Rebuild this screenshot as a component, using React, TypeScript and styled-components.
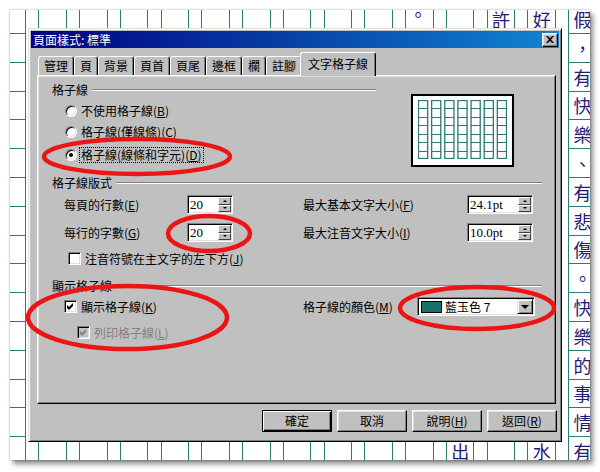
import React from 'react';
import styled, { createGlobalStyle } from 'styled-components';

const TEAL = '#2b7a75';
const FACE = '#c0c0c0';
const UI_FONT = `"Noto Sans CJK TC", "Liberation Sans", sans-serif`;

const GlobalStyle = createGlobalStyle`
  html, body { margin: 0; padding: 0; background: #ffffff; }
  body { font-family: ${UI_FONT}; }
  *, *::before, *::after { box-sizing: border-box; }
`;

/* ---------- manuscript page ---------- */

const Root = styled.div`
  position: relative;
  width: 600px;
  height: 472px;
  padding: 10px;
  background: #fff;
  overflow: hidden;
`;

const Page = styled.div`
  width: 580px;
  height: 450px;
  background: #fff;
  overflow: hidden;
  box-shadow: 0 0 2px rgba(0, 0, 0, 0.35), 3px 4px 5px rgba(0, 0, 0, 0.45);
`;

const Grid = styled.div`
  display: flex;
  height: 100%;
  margin-left: -24.77px;
`;

const Unit = styled.div`
  flex: none;
  display: flex;
  width: 40.77px;
  height: 100%;
`;

const Gutter = styled.div`
  flex: none;
  width: 12.27px;
`;

const CharColumn = styled.div`
  flex: none;
  width: 28.5px;
  height: 100%;
  border-left: 1px solid ${TEAL};
  border-right: 1px solid ${TEAL};
`;

const Cells = styled.div`
  display: flex;
  flex-direction: column;
  margin-top: -4.8px;
`;

const Cell = styled.div<{ $up?: boolean }>`
  flex: none;
  height: 28.8px;
  border-bottom: 1px solid ${TEAL};
  display: flex;
  align-items: center;
  justify-content: center;
  padding-bottom: ${(p) => (p.$up ? 11 : 0)}px;
  padding-right: ${(p) => (p.$up ? 3 : 0)}px;
  font-family: ${UI_FONT};
  font-size: 18px;
  line-height: 1;
  color: #1d1d78;
`;

/* ---------- dialog ---------- */

const Dialog = styled.div`
  position: absolute;
  left: 28px;
  top: 28px;
  width: 534px;
  height: 414px;
  display: flex;
  flex-direction: column;
  padding: 2px;
  background: ${FACE};
  border: 1px solid;
  border-color: #dfdfdf #000 #000 #dfdfdf;
  box-shadow: inset 1px 1px 0 #fff, inset -1px -1px 0 #808080;
  font-family: ${UI_FONT};
  font-size: 12px;
  line-height: 14px;
  color: #000;
`;

const TitleBar = styled.div`
  flex: none;
  height: 17px;
  display: flex;
  align-items: center;
  padding: 0 1px 0 2px;
  background: linear-gradient(to right, #000080, #1084d0);
  color: #fff;
`;

const TitleText = styled.span`
  white-space: nowrap;
`;

const CloseButton = styled.div`
  margin-left: auto;
  width: 16px;
  height: 14px;
  display: flex;
  align-items: center;
  justify-content: center;
  background: ${FACE};
  border: 1px solid;
  border-color: #fff #000 #000 #fff;
  box-shadow: inset -1px -1px 0 #808080, inset 1px 1px 0 #dfdfdf;
`;

const DialogBody = styled.div`
  flex: 1;
  display: flex;
  flex-direction: column;
  padding: 4px 1px 0 6px;
`;

const TabStrip = styled.div`
  flex: none;
  height: 24px;
  display: flex;
  align-items: flex-end;
  padding-left: 1px;
  position: relative;
  z-index: 1;
`;

const Tab = styled.div<{ $w: number; $active?: boolean }>`
  flex: none;
  position: relative;
  z-index: ${(p) => (p.$active ? 2 : 1)};
  width: ${(p) => p.$w + (p.$active ? 4 : 0)}px;
  height: ${(p) => (p.$active ? 24 : 19)}px;
  margin: 0 ${(p) => (p.$active ? -2 : 0)}px ${(p) => (p.$active ? 0 : 1)}px;
  display: flex;
  align-items: center;
  justify-content: center;
  padding-bottom: ${(p) => (p.$active ? 1 : 0)}px;
  background: ${FACE};
  border: 1px solid;
  border-bottom: none;
  border-color: #fff #000 transparent #fff;
  border-radius: 3px 3px 0 0;
  box-shadow: inset -1px 0 0 #808080;
  white-space: nowrap;
`;

const Panel = styled.div`
  flex: none;
  position: relative;
  width: 519px;
  height: 329px;
  margin-top: -1px;
  padding: 7px 0 0 14px;
  display: flex;
  flex-direction: column;
  background: ${FACE};
  border: 1px solid;
  border-color: #fff #000 #000 #fff;
  box-shadow: inset -1px -1px 0 #808080, inset 1px 1px 0 #dfdfdf;
`;

const TopSection = styled.div`
  flex: none;
  height: 93px;
  display: flex;
`;

const GroupColumn = styled.div<{ $w: number }>`
  flex: none;
  width: ${(p) => p.$w}px;
  display: flex;
  flex-direction: column;
`;

const GroupHeader = styled.div<{ $w: number; $mt?: number }>`
  flex: none;
  width: ${(p) => p.$w}px;
  height: 14px;
  margin-top: ${(p) => p.$mt ?? 0}px;
  display: flex;
  align-items: center;
  gap: 4px;
`;

const GroupLabel = styled.span`
  white-space: nowrap;
`;

const Rule = styled.div`
  flex: 1;
  border-top: 1px solid #808080;
  border-bottom: 1px solid #fff;
`;

const RadioList = styled.div`
  display: flex;
  flex-direction: column;
  padding-left: 13px;
`;

const OptionRow = styled.div<{ $mt?: number; $pl?: number; $h?: number }>`
  flex: none;
  height: ${(p) => p.$h ?? 21}px;
  margin-top: ${(p) => p.$mt ?? 0}px;
  padding-left: ${(p) => p.$pl ?? 0}px;
  display: flex;
  align-items: center;
  gap: 4px;
  white-space: nowrap;
`;

const Radio = styled.span<{ $checked?: boolean }>`
  flex: none;
  width: 12px;
  height: 12px;
  border-radius: 50%;
  display: flex;
  align-items: center;
  justify-content: center;
  background: #fff;
  border: 1px solid;
  border-color: #808080 #fff #fff #808080;
  box-shadow: inset 1px 1px 0 #000, inset -1px -1px 0 #dfdfdf;
  &::after {
    content: '';
    width: 4px;
    height: 4px;
    border-radius: 50%;
    background: ${(p) => (p.$checked ? '#000' : 'transparent')};
  }
`;

const FocusLabel = styled.span`
  margin-left: -2px;
  padding: 1px 2px;
  outline: 1px dotted #000;
  outline-offset: -1px;
`;

const CheckBox = styled.span<{ $disabled?: boolean }>`
  flex: none;
  width: 13px;
  height: 13px;
  display: flex;
  align-items: center;
  justify-content: center;
  background: ${(p) => (p.$disabled ? FACE : '#fff')};
  border: 1px solid;
  border-color: #808080 #fff #fff #808080;
  box-shadow: inset 1px 1px 0 #000, inset -1px -1px 0 #dfdfdf;
`;

const Label = styled.span<{ $disabled?: boolean }>`
  white-space: nowrap;
  color: ${(p) => (p.$disabled ? '#808080' : '#000')};
`;

const Mn = styled.span`
  text-decoration: underline;
`;

const PreviewFrame = styled.div`
  flex: none;
  width: 103px;
  height: 73px;
  margin: 11px 0 0 35px;
  padding: 4px 5px 6px;
  background: #fff;
  border: 2px solid #000;
`;

const FieldGrid = styled.div<{ $cols: string; $mt: number }>`
  flex: none;
  display: grid;
  grid-template-columns: ${(p) => p.$cols};
  grid-auto-rows: 19px;
  row-gap: 9px;
  align-items: center;
  padding-left: 12px;
  margin-top: ${(p) => p.$mt}px;
  white-space: nowrap;
`;

const SpinBox = styled.div<{ $w: number }>`
  width: ${(p) => p.$w}px;
  height: 19px;
  display: flex;
  padding: 1px;
  background: #fff;
  border: 1px solid;
  border-color: #808080 #fff #fff #808080;
  box-shadow: inset 1px 1px 0 #000, inset -1px -1px 0 #dfdfdf;
`;

const SpinValue = styled.span`
  flex: 1;
  padding-left: 1px;
  font-family: "Liberation Serif", serif;
  font-size: 13px;
  line-height: 15px;
`;

const SpinButtons = styled.div`
  flex: none;
  width: 13px;
  display: flex;
  flex-direction: column;
`;

const SpinBtn = styled.div<{ $down?: boolean }>`
  flex: 1;
  display: flex;
  align-items: center;
  justify-content: center;
  background: ${FACE};
  border: 1px solid;
  border-color: #fff #404040 #404040 #fff;
  &::after {
    content: '';
    border-left: 2px solid transparent;
    border-right: 2px solid transparent;
    ${(p) => (p.$down ? 'border-top: 2px solid #000;' : 'border-bottom: 2px solid #000;')}
  }
`;

const Select = styled.div`
  width: 118px;
  height: 19px;
  display: flex;
  align-items: center;
  padding: 1px;
  background: #fff;
  border: 1px solid;
  border-color: #808080 #fff #fff #808080;
  box-shadow: inset 1px 1px 0 #000, inset -1px -1px 0 #dfdfdf;
`;

const Swatch = styled.span<{ $color: string }>`
  flex: none;
  width: 21px;
  height: 12px;
  margin-left: 2px;
  background: ${(p) => p.$color};
  border: 1px solid #000;
`;

const SelectText = styled.span`
  flex: 1;
  margin-left: 3px;
`;

const DropBtn = styled.div`
  flex: none;
  width: 16px;
  height: 15px;
  display: flex;
  align-items: center;
  justify-content: center;
  background: ${FACE};
  border: 1px solid;
  border-color: #dfdfdf #000 #000 #dfdfdf;
  box-shadow: inset 1px 1px 0 #fff, inset -1px -1px 0 #808080;
  &::after {
    content: '';
    border-left: 4px solid transparent;
    border-right: 4px solid transparent;
    border-top: 4px solid #000;
  }
`;

const ButtonRow = styled.div`
  flex: none;
  margin-top: 6px;
  padding-right: 1px;
  display: flex;
  justify-content: flex-end;
  gap: 5px;
`;

const Button = styled.div<{ $default?: boolean }>`
  width: 70px;
  height: 22px;
  display: flex;
  align-items: center;
  justify-content: center;
  background: ${FACE};
  border: 1px solid;
  border-color: ${(p) => (p.$default ? '#000' : '#fff #000 #000 #fff')};
  box-shadow: ${(p) =>
    p.$default
      ? 'inset 1px 1px 0 #fff, inset -1px -1px 0 #000, inset -2px -2px 0 #808080'
      : 'inset -1px -1px 0 #808080, inset 1px 1px 0 #dfdfdf'};
  white-space: nowrap;
`;

const Annotations = styled.svg`
  position: absolute;
  left: 0;
  top: 0;
  width: 600px;
  height: 472px;
  pointer-events: none;
`;

/* ---------- data ---------- */

const UNITS = 15;
const ROWS = 16;
const glyphs: Record<number, Record<number, string>> = {
  14: Object.fromEntries([...'假，有快樂、有悲傷。快樂的事情有'].map((c, i) => [i, c])),
  13: { 0: '好', 15: '水' },
  12: { 0: '許' },
  11: { 15: '出' },
  10: { 0: '。' },
};

const TABS = [
  { label: '管理', w: 36 },
  { label: '頁', w: 24 },
  { label: '背景', w: 36 },
  { label: '頁首', w: 36 },
  { label: '頁尾', w: 36 },
  { label: '邊框', w: 36 },
  { label: '欄', w: 24 },
  { label: '註腳', w: 36 },
  { label: '文字格子線', w: 72, active: true },
];

const mn = (text: string, key: string) => (
  <>
    {text}(<Mn>{key}</Mn>)
  </>
);

function CheckMark({ color }: { color: string }) {
  return (
    <svg width="7" height="7" viewBox="0 0 7 7">
      <path d="M0 2 L2 4 L6 0 L6 3 L2 7 L0 5 Z" fill={color} />
    </svg>
  );
}

function Spinner({ w, value }: { w: number; value: string }) {
  return (
    <SpinBox $w={w}>
      <SpinValue>{value}</SpinValue>
      <SpinButtons>
        <SpinBtn />
        <SpinBtn $down />
      </SpinButtons>
    </SpinBox>
  );
}

function PreviewGrid() {
  const W = 89;
  const H = 59;
  const n = 7;
  const gap = 3;
  const cw = (W - gap * (n - 1)) / n;
  const rowH = H / 7;
  const items: React.ReactNode[] = [];
  for (let i = 0; i < n; i++) {
    const x = i * (cw + gap);
    items.push(
      <rect key={`c${i}`} x={x + 0.5} y={0.5} width={cw - 1} height={H - 1} fill="none" stroke={TEAL} strokeWidth={1.3} />
    );
    for (let j = 1; j < 7; j++) {
      const y = Math.round(j * rowH) + 0.5;
      items.push(<line key={`h${i}-${j}`} x1={x} x2={x + cw} y1={y} y2={y} stroke={TEAL} strokeWidth={1} />);
    }
  }
  return (
    <svg width={W} height={H} viewBox={`0 0 ${W} ${H}`} style={{ display: 'block' }}>
      {items}
    </svg>
  );
}

export default function App() {
  return (
    <>
      <GlobalStyle />
      <Root>
        <Page>
          <Grid>
            {Array.from({ length: UNITS }, (_, u) => (
              <Unit key={u}>
                <Gutter />
                <CharColumn>
                  <Cells>
                    {Array.from({ length: ROWS }, (_, r) => {
                      const ch = glyphs[u]?.[r] ?? '';
                      return (
                        <Cell key={r} $up={ch === '。' && r === 0}>
                          {ch}
                        </Cell>
                      );
                    })}
                  </Cells>
                </CharColumn>
              </Unit>
            ))}
          </Grid>
        </Page>

        <Dialog>
          <TitleBar>
            <TitleText>頁面樣式: 標準</TitleText>
            <CloseButton>
              <svg width="8" height="7" viewBox="0 0 8 7">
                <path d="M0 0 H2 L4 2.3 L6 0 H8 L5 3.5 L8 7 H6 L4 4.7 L2 7 H0 L3 3.5 Z" fill="#000" />
              </svg>
            </CloseButton>
          </TitleBar>

          <DialogBody>
            <TabStrip>
              {TABS.map((t) => (
                <Tab key={t.label} $w={t.w} $active={t.active}>
                  {t.label}
                </Tab>
              ))}
            </TabStrip>

            <Panel>
              <TopSection>
                <GroupColumn $w={324}>
                  <GroupHeader $w={324}>
                    <GroupLabel>格子線</GroupLabel>
                    <Rule />
                  </GroupHeader>
                  <RadioList>
                    <OptionRow $mt={3}>
                      <Radio />
                      <Label>{mn('不使用格子線', 'B')}</Label>
                    </OptionRow>
                    <OptionRow>
                      <Radio />
                      <Label>{mn('格子線(僅線條)', 'C')}</Label>
                    </OptionRow>
                    <OptionRow $mt={2}>
                      <Radio $checked />
                      <FocusLabel>{mn('格子線(線條和字元)', 'D')}</FocusLabel>
                    </OptionRow>
                  </RadioList>
                </GroupColumn>
                <PreviewFrame>
                  <PreviewGrid />
                </PreviewFrame>
              </TopSection>

              <GroupHeader $w={490}>
                <GroupLabel>格子線版式</GroupLabel>
                <Rule />
              </GroupHeader>
              <FieldGrid $cols="123px 46px 70px 164px 66px" $mt={5}>
                <Label>{mn('每頁的行數', 'E')}</Label>
                <Spinner w={46} value="20" />
                <span />
                <Label>{mn('最大基本文字大小', 'F')}</Label>
                <Spinner w={66} value="24.1pt" />

                <Label>{mn('每行的字數', 'G')}</Label>
                <Spinner w={46} value="20" />
                <span />
                <Label>{mn('最大注音文字大小', 'I')}</Label>
                <Spinner w={66} value="10.0pt" />
              </FieldGrid>
              <OptionRow $mt={10} $pl={16} $h={13}>
                <CheckBox />
                <Label>{mn('注音符號在主文字的左下方', 'J')}</Label>
              </OptionRow>

              <GroupHeader $w={490} $mt={14}>
                <GroupLabel>顯示格子線</GroupLabel>
                <Rule />
              </GroupHeader>
              <FieldGrid $cols="239px 114px 118px" $mt={4}>
                <OptionRow $h={19}>
                  <CheckBox>
                    <CheckMark color="#000" />
                  </CheckBox>
                  <Label>{mn('顯示格子線', 'K')}</Label>
                </OptionRow>
                <Label>{mn('格子線的顏色', 'M')}</Label>
                <Select>
                  <Swatch $color="#17726d" />
                  <SelectText>藍玉色 7</SelectText>
                  <DropBtn />
                </Select>
              </FieldGrid>
              <OptionRow $mt={10} $pl={25} $h={13}>
                <CheckBox $disabled>
                  <CheckMark color="#808080" />
                </CheckBox>
                <Label $disabled>{mn('列印格子線', 'L')}</Label>
              </OptionRow>
            </Panel>

            <ButtonRow>
              <Button $default>確定</Button>
              <Button>取消</Button>
              <Button>{mn('說明', 'H')}</Button>
              <Button>{mn('返回', 'R')}</Button>
            </ButtonRow>
          </DialogBody>
        </Dialog>

        <Annotations viewBox="0 0 600 472">
          <g fill="none" stroke="#ec1515" strokeWidth={4.5}>
            <ellipse cx={137} cy={156.5} rx={93} ry={17.5} />
            <ellipse cx={209} cy={233.5} rx={41} ry={17.5} />
            <ellipse cx={127.5} cy={317.5} rx={99.5} ry={31.5} />
            <ellipse cx={477} cy={308} rx={77} ry={21} />
          </g>
        </Annotations>
      </Root>
    </>
  );
}
